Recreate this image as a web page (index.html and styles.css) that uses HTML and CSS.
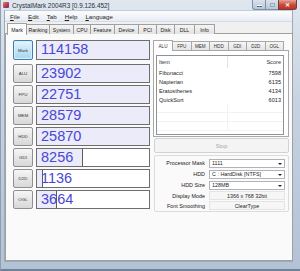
FILE: index.html
```html
<!DOCTYPE html>
<html lang="en">
<head>
    <meta charset="UTF-8">
    <title>CrystalMark 2004R3</title>
    <link rel="stylesheet" href="styles.css">
</head>
<body>
    <div class="window">
        <div class="titlebar">
            <span class="app-icon"></span>
            <span class="title">CrystalMark 2004R3 [0.9.126.452]</span>
            <div class="controls">
                <span class="ctl min"><i></i></span>
                <span class="ctl max"><i></i></span>
                <span class="ctl close">&#x2715;</span>
            </div>
        </div>

        <div class="client">
            <div class="menubar">
                <span><u>F</u>ile</span>
                <span><u>E</u>dit</span>
                <span><u>T</u>ab</span>
                <span><u>H</u>elp</span>
                <span><u>L</u>anguage</span>
            </div>

            <div class="tabs">
                <div class="tab active w20">Mark</div>
                <div class="tab w23">Ranking</div>
                <div class="tab w24">System</div>
                <div class="tab w17">CPU</div>
                <div class="tab w24">Feature</div>
                <div class="tab w24">Device</div>
                <div class="tab w18">PCI</div>
                <div class="tab w18">Disk</div>
                <div class="tab w20">DLL</div>
                <div class="tab w20">Info</div>
            </div>

            <div class="page">
                <div class="scores">
                    <div class="score-row main">
                        <div class="bench active">Mark</div>
                        <div class="meter"><span class="fill full" style="width:100%"></span><span class="val">114158</span></div>
                    </div>
                    <div class="score-row">
                        <div class="bench">ALU</div>
                        <div class="meter"><span class="fill full" style="width:100%"></span><span class="val">23902</span></div>
                    </div>
                    <div class="score-row">
                        <div class="bench">FPU</div>
                        <div class="meter"><span class="fill full" style="width:100%"></span><span class="val">22751</span></div>
                    </div>
                    <div class="score-row">
                        <div class="bench">MEM</div>
                        <div class="meter"><span class="fill full" style="width:100%"></span><span class="val">28579</span></div>
                    </div>
                    <div class="score-row">
                        <div class="bench">HDD</div>
                        <div class="meter"><span class="fill full" style="width:100%"></span><span class="val">25870</span></div>
                    </div>
                    <div class="score-row">
                        <div class="bench">GDI</div>
                        <div class="meter"><span class="fill" style="width:41.5%"></span><span class="val">8256</span></div>
                    </div>
                    <div class="score-row">
                        <div class="bench">D2D</div>
                        <div class="meter"><span class="fill" style="width:5.5%"></span><span class="val">1136</span></div>
                    </div>
                    <div class="score-row">
                        <div class="bench">OGL</div>
                        <div class="meter"><span class="fill" style="width:18%"></span><span class="val">3664</span></div>
                    </div>
                </div>

                <div class="side">
                    <div class="subtabs">
                        <div class="subtab active">ALU</div>
                        <div class="subtab">FPU</div>
                        <div class="subtab">MEM</div>
                        <div class="subtab">HDD</div>
                        <div class="subtab">GDI</div>
                        <div class="subtab">D2D</div>
                        <div class="subtab">OGL</div>
                    </div>
                    <div class="subpage">
                        <div class="list">
                            <div class="list-row head"><span>Item</span><span>Score</span></div>
                            <div class="list-row"><span>Fibonacci</span><span>7598</span></div>
                            <div class="list-row"><span>Napierian</span><span>6135</span></div>
                            <div class="list-row"><span>Eratosthenes</span><span>4134</span></div>
                            <div class="list-row"><span>QuickSort</span><span>6013</span></div>
                            <div class="list-row"><span></span><span></span></div>
                            <div class="list-row"><span></span><span></span></div>
                            <div class="list-row"><span></span><span></span></div>
                        </div>
                    </div>
                    <div class="stop">Stop</div>
                    <div class="group">
                        <div class="opt"><label>Processor Mask</label><div class="select">1111</div></div>
                        <div class="opt"><label>HDD</label><div class="select">C : HardDisk [NTFS]</div></div>
                        <div class="opt"><label>HDD Size</label><div class="select">128MB</div></div>
                        <div class="opt info"><label>Display Mode</label><div class="value">1366 x 768 32bit</div></div>
                        <div class="opt info"><label>Font Smoothing</label><div class="value">ClearType</div></div>
                    </div>
                </div>
            </div>
        </div>
    </div>
</body>
</html>
```

FILE: styles.css
```css
* {
    box-sizing: border-box;
}
html, body {
    margin: 0;
    padding: 0;
}
body {
    width: 300px;
    height: 271px;
    overflow: hidden;
    font-family: 'Liberation Sans', Arial, sans-serif;
    color: #1e1e1e;
    background: #b8c7d8;
}
.window {
    width: 300px;
    height: 271px;
    padding: 0 7px 9px 3px;
    background: linear-gradient(#dfe6ee, #c4d2e1 40%, #b3c3d5);
    border-bottom: 2px solid #6f8199;
    border-left: 1px solid #8d9db2;
}
.titlebar {
    height: 10px;
    display: flex;
    align-items: center;
    margin-left: -2px;
    margin-right: -4px;
}
.app-icon {
    width: 6px;
    height: 6px;
    margin: 0 3px 0 1px;
    background: linear-gradient(135deg, #f08a24, #b0306a 60%, #5b3d9a);
    border-radius: 1px;
}
.title {
    font-size: 6.4px;
    color: #2a2f38;
}
.controls {
    margin-left: auto;
    display: flex;
    align-self: flex-start;
}
.ctl {
    height: 10px;
    display: flex;
    align-items: center;
    justify-content: center;
    border: 1px solid #7e90a8;
    border-top: none;
    background: linear-gradient(#d9e2ec, #b7c6d6);
}
.ctl.min,
.ctl.max {
    width: 13px;
    border-right: none;
}
.ctl.min {
    border-bottom-left-radius: 3px;
}
.ctl.min i {
    width: 5px;
    height: 2px;
    margin-top: 2px;
    background: #fff;
    border: 1px solid #55667d;
    border-width: 0 0 1px;
}
.ctl.max i {
    width: 5px;
    height: 4px;
    border: 1px solid #9aa8b8;
}
.ctl.close {
    width: 19px;
    font-size: 6px;
    font-weight: bold;
    color: #fff;
    background: linear-gradient(#e3a394, #c9483a 55%, #b8352a);
    border-color: #7f3a33;
    border-bottom-right-radius: 3px;
}
.client {
    height: 252px;
    background: #f0f0f0;
    border: 1px solid #9aa9bb;
    border-top-color: #c0ccd8;
}
.menubar {
    height: 11px;
    display: flex;
    align-items: center;
    gap: 6px;
    padding-left: 4px;
    font-size: 6.2px;
    background: linear-gradient(#fbfcfd, #e8ecf3);
    border-bottom: 1px solid #d7dde6;
}
.menubar span {
    padding: 0 1px;
}
.tabs {
    display: flex;
    height: 11px;
    padding: 1px 0 0 2px;
    position: relative;
    z-index: 1;
}
.tab {
    height: 10px;
    margin-top: 1px;
    font-size: 5.2px;
    display: flex;
    align-items: center;
    justify-content: center;
    border: 1px solid #a0a0a0;
    border-bottom: none;
    border-left: none;
    background: linear-gradient(#f4f4f4, #e2e2e2);
    color: #222;
}
.tab.active {
    height: 11px;
    margin-top: 0;
    background: #fcfcfc;
    border-left: 1px solid #a0a0a0;
    height: 12px;
}
.w17 { width: 17px; }
.w18 { width: 18px; }
.w20 { width: 20px; }
.w23 { width: 23px; }
.w24 { width: 24px; }
.page {
    margin: 0 0 0 0;
    width: 288px;
    height: 228px;
    background: #fafafa;
    border: 1px solid #a0a0a0;
    display: flex;
    gap: 3px;
    padding: 6px 0 0 7px;
}
.scores {
    display: flex;
    flex-direction: column;
    gap: 2px;
}
.score-row {
    display: flex;
    gap: 3px;
    height: 19px;
}
.score-row.main {
    height: 20px;
    margin-bottom: 2px;
}
.bench {
    width: 20px;
    font-size: 4.4px;
    display: flex;
    align-items: center;
    justify-content: center;
    color: #333;
    border: 1px solid #8f8f8f;
    border-radius: 2px;
    background: linear-gradient(#f6f6f6, #e6e6e6 50%, #d8d8d8);
}
.bench.active {
    border-color: #3c7fb1;
    background: linear-gradient(#e6f4fc, #c4e4f6 50%, #a9d6f0);
    box-shadow: inset 0 0 0 1px #d8eef9;
}
.meter {
    position: relative;
    width: 114px;
    background: #fff;
    border: 1px solid #6e6e6e;
    overflow: hidden;
}
.fill {
    position: absolute;
    left: 0;
    top: 0;
    bottom: 0;
    background: #ebebf9;
    border-right: 1px solid #5d5d5d;
}
.fill.full {
    border-right: none;
}
.val {
    position: relative;
    display: block;
    padding-left: 4px;
    font-size: 14.5px;
    line-height: 16px;
    color: #4848d6;
}
.side {
    width: 136px;
    display: flex;
    flex-direction: column;
}
.subtabs {
    display: flex;
    height: 10px;
    position: relative;
    z-index: 1;
}
.subtab {
    width: 18.5px;
    height: 9px;
    margin-top: 1px;
    font-size: 4.6px;
    display: flex;
    align-items: center;
    justify-content: center;
    border: 1px solid #a8a8a8;
    border-left: none;
    border-bottom: none;
    background: linear-gradient(#f6f6f6, #e4e4e4);
    color: #333;
}
.subtab.active {
    width: 20px;
    height: 11px;
    margin-top: 0;
    border-left: 1px solid #a8a8a8;
    background: #fff;
}
.subpage {
    height: 87px;
    border: 1px solid #a8a8a8;
    background: #fff;
    padding: 4px 4px 1px 2px;
}
.list {
    height: 80px;
    border: 1px solid #8e939b;
    overflow: hidden;
}
.list-row {
    display: grid;
    grid-template-columns: 71px 1fr;
    height: 9px;
    font-size: 5.6px;
    align-items: center;
}
.list-row span {
    padding: 0 2px;
    height: 100%;
    display: flex;
    align-items: center;
}
.list-row span:last-child {
    justify-content: flex-end;
}
.list-row.head {
    height: 12px;
    color: #333;
}
.list-row.head span:first-child {
    border-right: 1px solid #e3e3e3;
}
.list-row span:empty {
    border-bottom: 1px solid #f2f2f2;
}
.list-row span:empty:first-child {
    border-right: 1px solid #f2f2f2;
}
.stop {
    height: 15px;
    margin: 1px 0 2px 1px;
    border: 1px solid #d2d2d2;
    border-radius: 2px;
    background: #f4f4f4;
    color: #a6a6a6;
    font-size: 5.6px;
    display: flex;
    align-items: center;
    justify-content: center;
}
.group {
    height: 57px;
    margin-left: 1px;
    border: 1px solid #dcdcdc;
    border-radius: 2px;
    padding: 2px 3px 0 0;
    display: flex;
    flex-direction: column;
    gap: 1px;
}
.opt {
    display: flex;
    align-items: center;
    gap: 4px;
    height: 10px;
    font-size: 5.4px;
}
.opt.info {
    height: 9px;
}
.opt label {
    width: 50px;
    text-align: right;
    color: #222;
}
.select {
    flex: 1;
    height: 9px;
    padding-left: 2px;
    display: flex;
    align-items: center;
    background: #fff;
    border: 1px solid #b0b3b9;
    position: relative;
}
.select::after {
    content: "";
    position: absolute;
    right: 2px;
    top: 3px;
    border: 2px solid transparent;
    border-top: 2px solid #222;
    border-bottom: none;
}
.value {
    flex: 1;
    height: 9px;
    display: flex;
    align-items: center;
    justify-content: center;
    background: #f6f6f6;
    border: 1px solid #e4e4e4;
}
```
